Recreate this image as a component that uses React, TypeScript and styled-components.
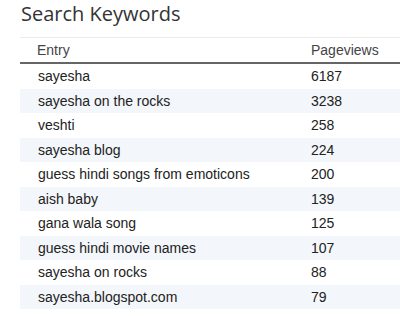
import React from 'react';
import styled, { createGlobalStyle } from 'styled-components';

const rows = [
	{ entry: 'sayesha', views: 6187 },
	{ entry: 'sayesha on the rocks', views: 3238 },
	{ entry: 'veshti', views: 258 },
	{ entry: 'sayesha blog', views: 224 },
	{ entry: 'guess hindi songs from emoticons', views: 200 },
	{ entry: 'aish baby', views: 139 },
	{ entry: 'gana wala song', views: 125 },
	{ entry: 'guess hindi movie names', views: 107 },
	{ entry: 'sayesha on rocks', views: 88 },
	{ entry: 'sayesha.blogspot.com', views: 79 },
];

export default () => {
	return (
		<>
			<GlobalStyle />
			<Widget>
				<Title>Search Keywords</Title>
				<Table>
					<colgroup>
						<col style={{ width: 291 }} />
						<col />
					</colgroup>
					<thead>
						<tr>
							<Th>Entry</Th>
							<Th>Pageviews</Th>
						</tr>
					</thead>
					<tbody>
						{rows.map((row, i) => (
							<Row key={row.entry} shaded={i % 2 === 1}>
								<Td>{row.entry}</Td>
								<Td>{row.views}</Td>
							</Row>
						))}
					</tbody>
				</Table>
			</Widget>
		</>
	);
};

const GlobalStyle = createGlobalStyle`
	body {
		margin: 0;
		background: #fff;
	}
`;

const Widget = styled.div`
	width: 400px;
	overflow: hidden;
`;

const Title = styled.h2`
	margin: 0 0 10px;
	padding-left: 21px;
	font-family: 'Open Sans', sans-serif;
	font-weight: 400;
	font-size: 20px;
	color: #333;
`;

const Table = styled.table`
	margin-left: 20px;
	width: 380px;
	border-collapse: collapse;
	table-layout: fixed;
	font-family: 'Liberation Sans', Arial, sans-serif;
	font-size: 14px;
	color: #222;
	border-top: 1px solid #ebebeb;
`;

const Th = styled.th`
	height: 24px;
	padding: 0 0 0 17px;
	text-align: left;
	font-weight: 400;
	color: #444;
	border-bottom: 2px solid #666;
	&:last-child {
		padding-left: 0;
	}
`;

const Row = styled.tr<{ shaded: boolean }>`
	background: ${({ shaded }) => (shaded ? '#f3f6fa' : '#fff')};
`;

const Td = styled.td`
	height: 24.5px;
	padding: 0 0 0 18px;
	&:last-child {
		padding-left: 0;
	}
`;
